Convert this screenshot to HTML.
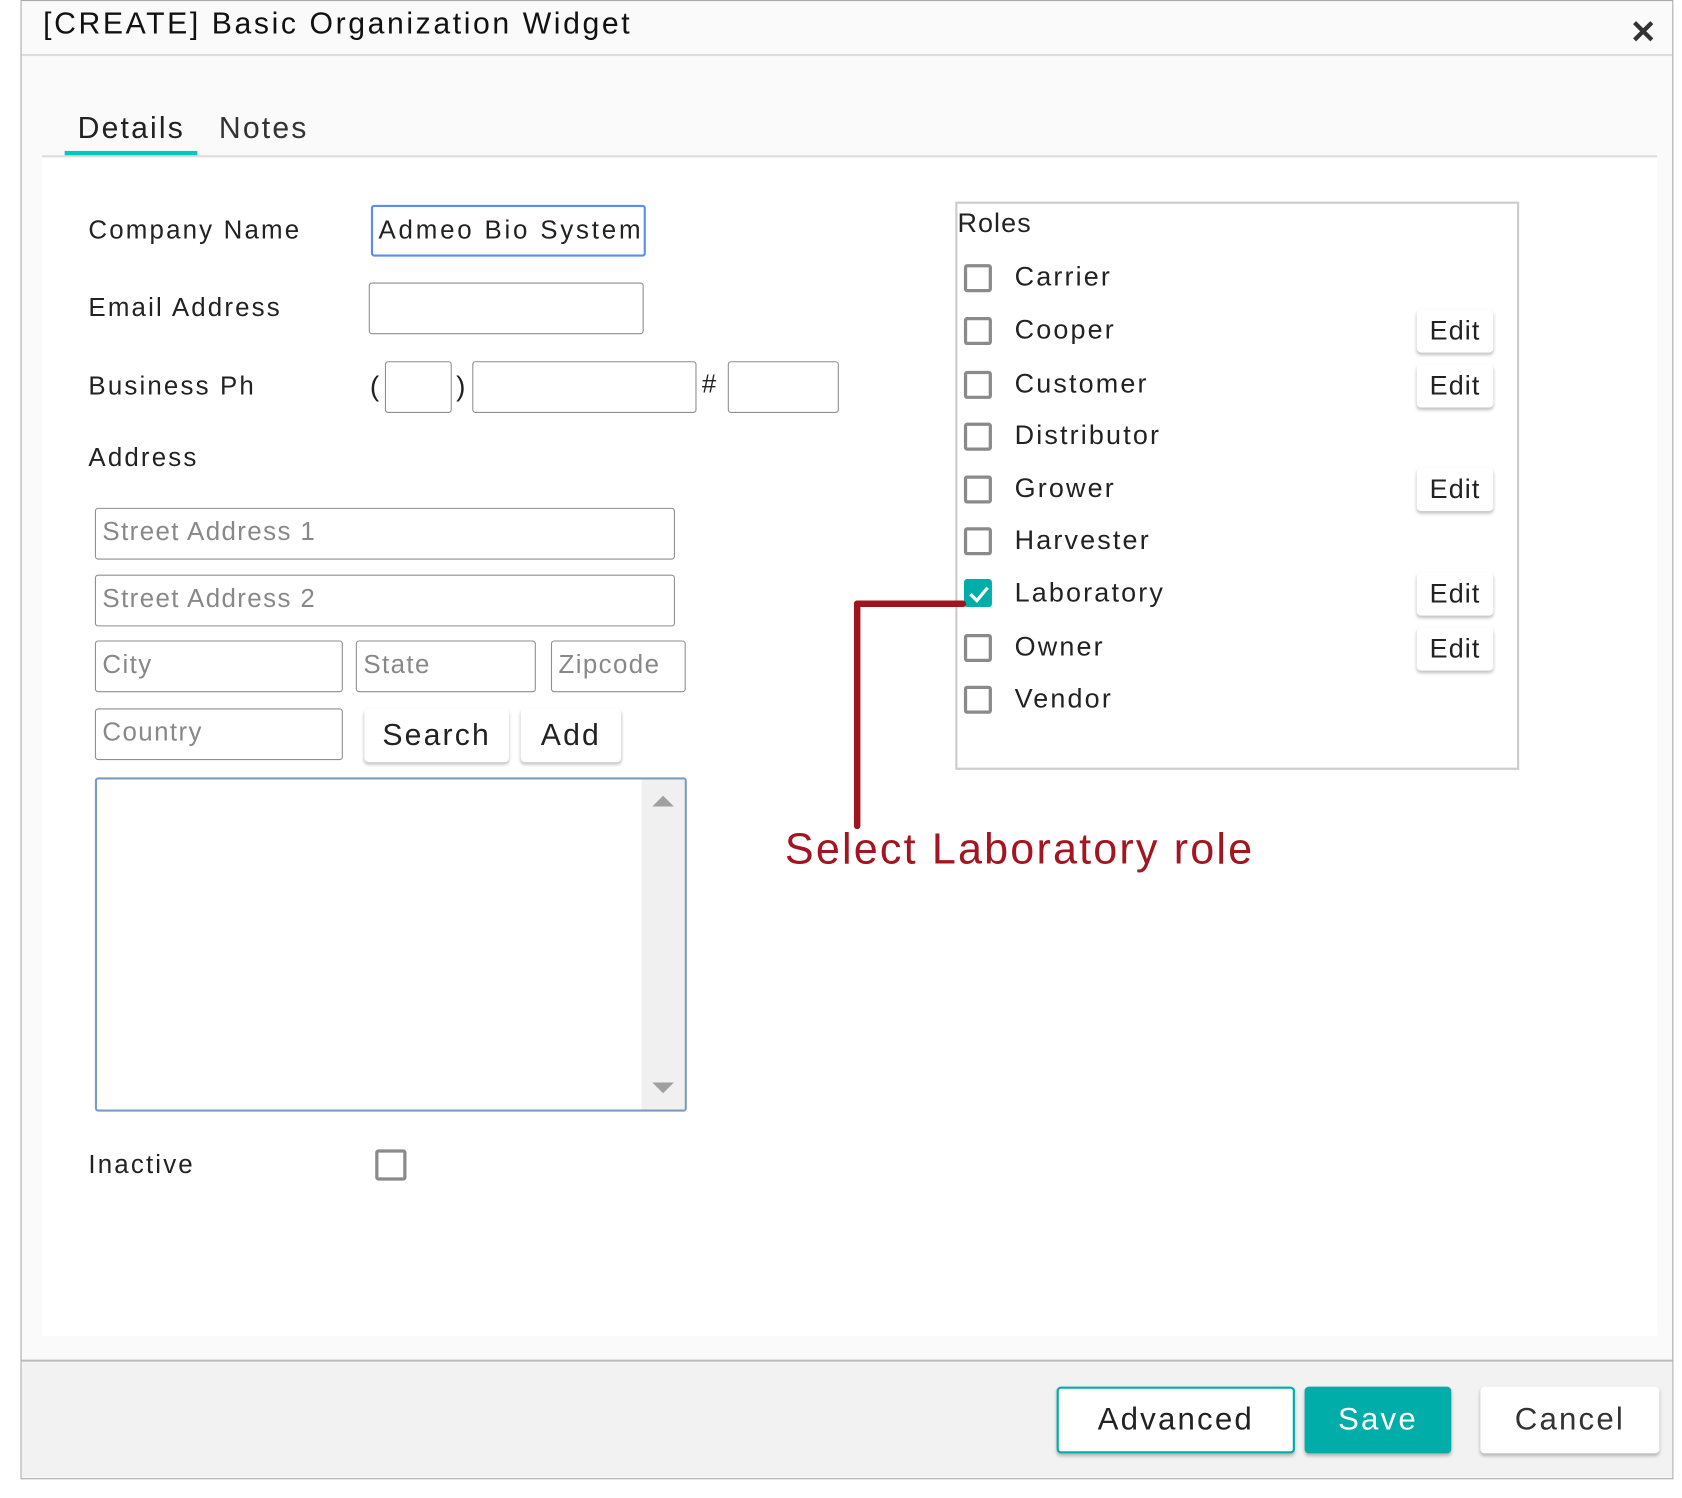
<!DOCTYPE html>
<html><head><meta charset="utf-8">
<style>
html,body{margin:0;padding:0;background:#fff;width:1682px;height:1498px;overflow:hidden;}
#w{position:absolute;left:0;top:0;width:1560px;height:1389px;transform:scale(1.0782);transform-origin:0 0;font-family:"Liberation Sans",sans-serif;color:#222;letter-spacing:2px;}
.a{position:absolute;}
.dlg{left:19px;top:0;width:1531px;height:1370px;border:1px solid #aaa;background:#fafafa;}
.t{white-space:nowrap;}
.in{position:absolute;border:1.5px solid #8e8e8e;border-radius:3px;background:#fff;box-sizing:border-box;}
.ph{color:#888;font-size:24px;padding-left:6px;line-height:44px;white-space:nowrap;overflow:hidden;letter-spacing:1.3px;}
.btn{position:absolute;background:#fff;border-radius:4px;box-shadow:0 2px 3px rgba(0,0,0,.25);text-align:center;box-sizing:border-box;}
.cb{position:absolute;width:26px;height:26px;border:3px solid #8a8a8a;border-radius:3px;box-sizing:border-box;left:894px;}
.rl{position:absolute;left:941px;font-size:25px;}
.ed{position:absolute;left:1314px;width:71px;height:40px;font-size:25px;line-height:40px;letter-spacing:1px;}
</style></head><body><div id="w">
<div class="a dlg"></div>
<div class="a t" style="left:40px;top:6px;font-size:28px;color:#111;letter-spacing:2.4px;">[CREATE] Basic Organization Widget</div>
<div class="a" style="left:20px;top:50px;width:1531px;height:2px;background:#ddd;"></div>
<svg class="a" style="left:1513px;top:18px" width="22" height="22" viewBox="0 0 22 22"><path d="M3 3L19 19M19 3L3 19" stroke="#333" stroke-width="4"/></svg>
<div class="a t" style="left:72px;top:103px;font-size:28px;color:#222;">Details</div>
<div class="a t" style="left:203px;top:103px;font-size:28px;color:#333;">Notes</div>
<div class="a" style="left:39px;top:144px;width:1498px;height:2px;background:#ddd;"></div>
<div class="a" style="left:60px;top:140px;width:123px;height:4px;background:#00c9c0;"></div>
<div class="a" style="left:39px;top:146px;width:1498px;height:1093px;background:#fff;"></div>

<div class="a t" style="left:82px;top:200px;font-size:24px;">Company Name</div>
<div class="a t" style="left:82px;top:272px;font-size:24px;">Email Address</div>
<div class="a t" style="left:82px;top:345px;font-size:24px;">Business Ph</div>
<div class="a t" style="left:82px;top:411px;font-size:24px;">Address</div>
<div class="a t" style="left:82px;top:1067px;font-size:24px;">Inactive</div>

<div class="in" style="left:344px;top:190px;width:255px;height:48px;border:2px solid #5b8def;font-size:24px;line-height:44px;padding-left:5px;overflow:hidden;white-space:nowrap;letter-spacing:2.6px;">Admeo Bio Systems</div>
<div class="in" style="left:342px;top:262px;width:255px;height:48px;"></div>
<div class="a" style="left:343px;top:343px;font-size:26px;">(</div>
<div class="in" style="left:357px;top:335px;width:62px;height:48px;"></div>
<div class="a" style="left:423px;top:343px;font-size:26px;">)</div>
<div class="in" style="left:438px;top:335px;width:208px;height:48px;"></div>
<div class="a" style="left:651px;top:343px;font-size:24px;">#</div>
<div class="in" style="left:675px;top:335px;width:103px;height:48px;"></div>

<div class="in ph" style="left:88px;top:471px;width:538px;height:48px;">Street Address 1</div>
<div class="in ph" style="left:88px;top:533px;width:538px;height:48px;">Street Address 2</div>
<div class="in ph" style="left:88px;top:594px;width:230px;height:48px;">City</div>
<div class="in ph" style="left:330px;top:594px;width:167px;height:48px;">State</div>
<div class="in ph" style="left:511px;top:594px;width:125px;height:48px;">Zipcode</div>
<div class="in ph" style="left:88px;top:657px;width:230px;height:48px;">Country</div>
<div class="btn" style="left:338px;top:657px;width:134px;height:50px;font-size:28px;line-height:50px;">Search</div>
<div class="btn" style="left:483px;top:657px;width:93px;height:50px;font-size:28px;line-height:50px;">Add</div>

<div class="in" style="left:88px;top:721px;width:549px;height:310px;border:2px solid #7a9cbd;">
<div class="a" style="right:0;top:0;width:40px;height:306px;background:#f0f0f0;"></div>
<svg class="a" style="right:10px;top:14px" width="20" height="12"><path d="M0 11L10 1L20 11Z" fill="#a0a0a0"/></svg>
<svg class="a" style="right:10px;top:280px" width="20" height="12"><path d="M0 1L10 11L20 1Z" fill="#a0a0a0"/></svg>
</div>
<div class="cb" style="left:348px;top:1066px;width:29px;height:29px;"></div>

<div class="a" style="left:886px;top:187px;width:519px;height:523px;border:2px solid #ccc;background:#fff;"></div>
<div class="a t" style="left:888px;top:193px;font-size:25px;letter-spacing:1px;">Roles</div>

<div class="cb" style="top:245px"></div><div class="rl" style="top:243px">Carrier</div>
<div class="cb" style="top:294px"></div><div class="rl" style="top:292px">Cooper</div>
<div class="cb" style="top:344px"></div><div class="rl" style="top:342px">Customer</div>
<div class="cb" style="top:392px"></div><div class="rl" style="top:390px">Distributor</div>
<div class="cb" style="top:441px"></div><div class="rl" style="top:439px">Grower</div>
<div class="cb" style="top:489px"></div><div class="rl" style="top:487px">Harvester</div>
<div class="cb" style="top:537px;background:#00ada8;border-color:#00ada8;"><svg class="a" style="left:1px;top:2px" width="20" height="18"><path d="M2 9L8 15L18 3" stroke="#fff" stroke-width="3" fill="none"/></svg></div><div class="rl" style="top:536px">Laboratory</div>
<div class="cb" style="top:588px"></div><div class="rl" style="top:586px">Owner</div>
<div class="cb" style="top:636px"></div><div class="rl" style="top:634px">Vendor</div>

<div class="btn ed" style="top:287px">Edit</div>
<div class="btn ed" style="top:338px">Edit</div>
<div class="btn ed" style="top:434px">Edit</div>
<div class="btn ed" style="top:531px">Edit</div>
<div class="btn ed" style="top:582px">Edit</div>

<div class="a" style="left:792px;top:557px;width:104px;height:6px;background:#a0141e;border-radius:3px;"></div>
<div class="a" style="left:792px;top:557px;width:6px;height:212px;background:#a0141e;border-radius:3px;"></div>
<div class="a t" style="left:728px;top:766px;font-size:40px;color:#a31621;letter-spacing:2px;">Select Laboratory role</div>

<div class="a" style="left:20px;top:1261px;width:1531px;height:2px;background:#bbb;"></div>
<div class="a" style="left:20px;top:1263px;width:1531px;height:107px;background:#f2f2f2;"></div>
<div class="btn" style="left:980px;top:1286px;width:221px;height:62px;border:2px solid #00ada8;font-size:29px;line-height:58px;">Advanced</div>
<div class="btn" style="left:1210px;top:1286px;width:136px;height:62px;background:#00ada8;color:#fff;font-size:29px;line-height:62px;">Save</div>
<div class="btn" style="left:1373px;top:1286px;width:166px;height:62px;font-size:29px;line-height:62px;color:#333;">Cancel</div>
</div></body></html>
